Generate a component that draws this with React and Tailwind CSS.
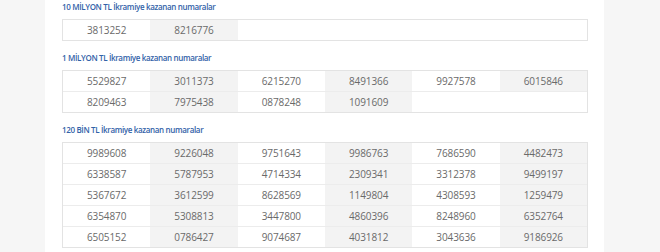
import React from "react";

const sections = [
  {
    title: "10 MİLYON TL İkramiye kazanan numaralar",
    rows: [["3813252", "8216776", "", "", "", ""]],
  },
  {
    title: "1 MİLYON TL İkramiye kazanan numaralar",
    rows: [
      ["5529827", "3011373", "6215270", "8491366", "9927578", "6015846"],
      ["8209463", "7975438", "0878248", "1091609", "", ""],
    ],
  },
  {
    title: "120 BİN TL İkramiye kazanan numaralar",
    rows: [
      ["9989608", "9226048", "9751643", "9986763", "7686590", "4482473"],
      ["6338587", "5787953", "4714334", "2309341", "3312378", "9499197"],
      ["5367672", "3612599", "8628569", "1149804", "4308593", "1259479"],
      ["6354870", "5308813", "3447800", "4860396", "8248960", "6352764"],
      ["6505152", "0786427", "9074687", "4031812", "3043636", "9186926"],
    ],
  },
];

const NumberTable = ({ rows }) => (
  <div className="border border-[#e3e3e3]">
    {rows.map((row, r) => (
      <div
        key={r}
        className={`grid grid-cols-6 ${r > 0 ? "border-t border-[#ececec]" : ""}`}
      >
        {row.map((num, i) => (
          <div
            key={i}
            className={`h-[20px] flex items-center justify-center text-[10px] tracking-[-0.1px] text-[#6a6a6a] ${
              num && i % 2 === 1 ? "bg-[#f3f3f3]" : "bg-white"
            }`}
          >
            {num}
          </div>
        ))}
      </div>
    ))}
  </div>
);

export default function App() {
  return (
    <div
      className="flex w-[660px] h-[252px] bg-[#f6f6f6] overflow-hidden"
      style={{ fontFamily: '"Open Sans", "Noto Sans", sans-serif' }}
    >
      <div className="w-[45px] shrink-0" />
      <div className="w-[559px] shrink-0 bg-white pl-[17px] pr-[16px] pt-[1px]">
        {sections.map((s, idx) => (
          <div key={idx} className={idx > 0 ? "mt-[11px]" : ""}>
            <h2 className="h-[12px] leading-[12px] text-[8px] font-semibold tracking-[-0.35px] text-[#3262a8] mb-[6px]">
              {s.title}
            </h2>
            <NumberTable rows={s.rows} />
          </div>
        ))}
      </div>
      <div className="flex-1" />
    </div>
  );
}
